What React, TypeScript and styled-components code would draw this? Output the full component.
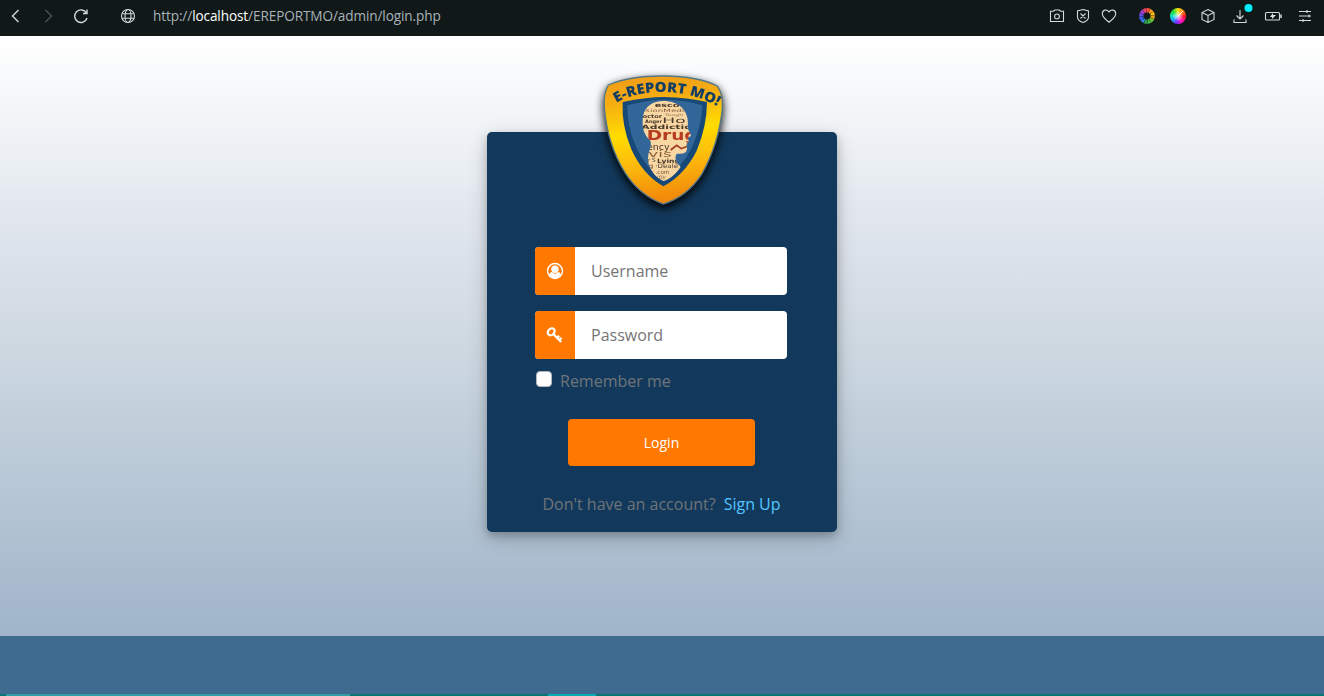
import React from 'react';
import styled, { createGlobalStyle } from 'styled-components';

const GlobalStyle = createGlobalStyle`
  * { box-sizing: border-box; }
  body { margin: 0; font-family: "Open Sans", sans-serif; overflow: hidden; }
`;

const Window = styled.div`
  display: flex;
  flex-direction: column;
  width: 1324px;
  height: 696px;
  background: #406b90;
`;

const BrowserBar = styled.header`
  display: flex;
  align-items: center;
  flex: none;
  height: 36px;
  padding: 0 9px 4px 6px;
  background: #101818;
  color: #d3dada;
`;

const Glyph = styled.svg<{ $gap?: number; $dim?: boolean }>`
  flex: none;
  width: 20px;
  height: 20px;
  margin-left: ${(p) => p.$gap ?? 0}px;
  fill: none;
  stroke: ${(p) => (p.$dim ? '#4b5353' : 'currentColor')};
  stroke-width: 1.1;
  overflow: visible;
`;

const Address = styled.div`
  flex: 1;
  margin-left: 15px;
  font: 400 13.6px/20px "Open Sans", sans-serif;
  letter-spacing: -0.11px;
  color: #a9b3b8;
  white-space: pre;
`;

const Host = styled.span`
  color: #fff;
`;

const Page = styled.main`
  display: flex;
  justify-content: center;
  align-items: flex-start;
  flex: none;
  height: 600px;
  padding-top: 96px;
  background: linear-gradient(#fff 0%, #e8edf2 24%, #e4e9f1 27%, #d6dde6 43%, #d3dce4 46%, #bccbd8 70%, #a0b4c9 100%);
`;

const Card = styled.section`
  display: flex;
  flex-direction: column;
  align-items: center;
  width: 350px;
  height: 400px;
  border-radius: 5px;
  background: #12395b;
  box-shadow: 0 4px 8px rgba(0, 0, 0, 0.2), 0 6px 20px rgba(0, 0, 0, 0.19);
`;

const Logo = styled.svg`
  flex: none;
  width: 150px;
  height: 150px;
  margin: -66px 0 31px 5px;
  overflow: visible;
  filter: drop-shadow(0 4px 5px #000);
`;

const Form = styled.form`
  display: flex;
  flex-direction: column;
  width: 252px;
  margin-right: 2px;
`;

const Field = styled.label`
  display: flex;
  height: 48px;
  margin-bottom: 16px;
  border-radius: 4px;
  overflow: hidden;
  background: #fff;
`;

const FieldIcon = styled.span`
  display: flex;
  align-items: center;
  justify-content: center;
  width: 40px;
  background: #ff7800;
`;

const Input = styled.input`
  flex: 1;
  min-width: 0;
  padding: 0 16px;
  border: 0;
  outline: 0;
  background: transparent;
  font: 400 16px "Open Sans", sans-serif;
  &::placeholder { color: #757575; opacity: 1; }
`;

const Remember = styled.label`
  display: flex;
  align-items: center;
  gap: 8px;
  height: 24px;
  margin: -6px 0 0 1px;
  font-size: 16px;
  color: #6f7479;
`;

const CheckBox = styled.span`
  width: 16px;
  height: 16px;
  margin-bottom: 4px;
  border: 1px solid #adb5bd;
  border-radius: 4px;
  background: #fff;
`;

const LoginButton = styled.button`
  width: 187px;
  height: 47px;
  margin: 26px auto 0 33px;
  border: 0;
  border-radius: 4px;
  background: #ff7800;
  color: #fff;
  font: 400 14px "Open Sans", sans-serif;
`;

const SignUpLine = styled.p`
  display: flex;
  justify-content: center;
  gap: 8px;
  margin: 26px 0 0 1px;
  font-size: 16px;
  line-height: 24px;
  color: #6f7479;
  white-space: nowrap;
`;

const SignUp = styled.a`
  color: #52c6ff;
`;

const Footer = styled.footer`
  flex: 1;
`;

const TaskStrip = styled.div`
  display: flex;
  flex: none;
  height: 2px;
  background: #087575;
`;

const TaskMark = styled.span<{ $width: number; $gap: number; $color: string }>`
  width: ${(p) => p.$width}px;
  margin-left: ${(p) => p.$gap}px;
  background: ${(p) => p.$color};
`;

const wheel = ['#ff4d3d', '#ff9d1c', '#ffbd14', '#e0a020', '#7dc832', '#43b649', '#2f9c4b', '#2f7de0', '#3d5bea', '#6a4be0', '#a23fd0', '#f0456a'];

const WheelIcon = () => (
  <Glyph $gap={18} viewBox="0 0 20 20">
    {wheel.map((c, i) => (
      <path key={c} d="M9.300 6.500 8 2.400Q10 1.700 12 2.400L10.700 6.500Z" fill={c} stroke="none" transform={`rotate(${i * 30 + 10} 10 10)`} />
    ))}
  </Glyph>
);

const Disc = styled.span`
  display: block;
  flex: none;
  width: 16px;
  height: 16px;
  margin-left: 13px;
  border-radius: 50%;
  background: linear-gradient(135deg, transparent 46%, #fff 47% 54%, transparent 55%) 8px 3px / 5px 5px no-repeat,
    radial-gradient(circle at 50% 50%, rgba(255, 255, 255, 0.75) 0 8%, transparent 50%),
    conic-gradient(#ffe600, #ff7a00 50deg, #ff1235 95deg, #ff10c8 150deg, #6a30ff 195deg, #18a8ff 235deg, #13e0c0 270deg, #20dc30 315deg, #ffe600);
`;

const Shield = () => (
  <Logo viewBox="0 0 450 450">
    <defs>
      <linearGradient id="gold" x1="0" y1="0" x2="0.12" y2="1">
        <stop offset="0" stopColor="#f09a18" />
        <stop offset="0.22" stopColor="#f5ad13" />
        <stop offset="0.48" stopColor="#ffdc00" />
        <stop offset="0.7" stopColor="#fdbd0b" />
        <stop offset="1" stopColor="#f28a0b" />
      </linearGradient>
      <clipPath id="head">
        <path d="M220 105C190 105 165 120 159 150C154 180 160 205 180 223C189 241 173 257 174 277C173 304 193 333 220 345C242 339 262 319 272 302C256 290 253 274 260 263C277 263 290 263 291 248L290 234L296 225L293 215L303 210C301 199 292 192 293 180C299 135 266 105 220 105Z" />
      </clipPath>
      <path id="arc" d="M79 111C147 68 285 62 386 123" />
    </defs>
    <path d="M55 57Q120 29 222 30Q325 31 382 60Q400 85 397 128Q386 235 335 325Q291 392 220 414Q149 389 105 320Q52 235 43 125Q40 80 55 57Z" fill="url(#gold)" stroke="#567887" strokeWidth="4" />
    <path d="M98 108Q173 93 222 93Q292 94 351 108Q351 180 320 254Q284 326 220 361Q158 326 124 250Q94 178 98 108Z" fill="#164878" />
    <path d="M112 118Q174 101 222 101Q285 102 337 118Q335 180 307 242Q277 304 220 341Q167 306 138 243Q111 182 112 118Z" fill="#326698" />
    <g clipPath="url(#head)" fontFamily="DejaVu Sans, sans-serif" fill="#49382c">
      <rect x="145" y="100" width="165" height="250" fill="#f8d7a2" />
      <text x="194" y="124" fontSize="17" fontWeight="700" textLength="74" lengthAdjust="spacingAndGlyphs">esco</text>
      <text x="166" y="139" fontSize="13" textLength="117" lengthAdjust="spacingAndGlyphs" fill="#8b6346">sionMedi</text>
      <text x="158" y="156" fontSize="15" fontWeight="700" textLength="58" lengthAdjust="spacingAndGlyphs">octor</text>
      <text x="225" y="151" fontSize="10" textLength="54" lengthAdjust="spacingAndGlyphs" fill="#957050">Tough</text>
      <text x="165" y="170" fontSize="14" fontWeight="700" textLength="51" lengthAdjust="spacingAndGlyphs">Anger</text>
      <text x="217" y="172" fontSize="23" textLength="70" lengthAdjust="spacingAndGlyphs">Ho</text>
      <text x="154" y="190" fontSize="18" fontWeight="700" textLength="151" lengthAdjust="spacingAndGlyphs">Addictio</text>
      <text x="170" y="223" fontSize="40" fontWeight="700" fill="#b63d22" textLength="153" lengthAdjust="spacingAndGlyphs">Drug</text>
      <text x="171" y="251" fontSize="24" textLength="68" lengthAdjust="spacingAndGlyphs">ency</text>
      <path d="M242 252L260 238L274 248L292 241" fill="none" stroke="#a43b20" strokeWidth="5" />
      <text x="175" y="273" fontSize="24" fill="#885f3c" textLength="70" lengthAdjust="spacingAndGlyphs">vis</text>
      <text x="169" y="289" fontSize="17">ir S</text>
      <text x="201" y="290" fontSize="18" fontWeight="700" textLength="69" lengthAdjust="spacingAndGlyphs">Lying</text>
      <text x="176" y="307" fontSize="18" textLength="88" lengthAdjust="spacingAndGlyphs">g ·Deale</text>
      <text x="181" y="324" fontSize="17" fill="#795437">y .com</text>
      <text x="201" y="339" fontSize="14" fill="#795437">(O)r</text>
    </g>
    <text fontFamily="Open Sans, sans-serif" fontSize="42" fontWeight="800" fill="#123e65">
      <textPath href="#arc" textLength="316" lengthAdjust="spacingAndGlyphs">E-REPORT MO!</textPath>
    </text>
  </Logo>
);

export default function App() {
  return (
    <Window>
      <GlobalStyle />
      <BrowserBar>
        <Glyph viewBox="0 0 20 20"><path d="M12.5 4 6.5 10l6 6" strokeWidth="1.4" /></Glyph>
        <Glyph $gap={12} $dim viewBox="0 0 20 20"><path d="m7.5 4 6 6-6 6" strokeWidth="1.4" /></Glyph>
        <Glyph $gap={13} viewBox="0 0 20 20"><path d="M15.4 7A6.3 6.3 0 1 0 16 12M16 3.5V7.5h-4" strokeWidth="1.4" /></Glyph>
        <Glyph $gap={27} viewBox="0 0 20 20">
          <circle cx="10" cy="10" r="6.5" /><ellipse cx="10" cy="10" rx="3" ry="6.5" /><path d="M4.2 7.8h11.6M4.2 12.2h11.6" />
        </Glyph>
        <Address>http://<Host>localhost</Host>/EREPORTMO/admin/login.php</Address>
        <Glyph viewBox="0 0 20 20"><path d="M3.5 5.2h3L7.7 4h4.6l1.2 1.2h3v10.300h-13z" /><circle cx="10" cy="10.400" r="2.400" /></Glyph>
        <Glyph $gap={6} viewBox="0 0 20 20"><path d="M10 3.5 15.5 5v6c0 3-2.500 4.500-5.500 5.500C7 15.500 4.500 14 4.500 11V5zM7.500 7.500l5 5M12.500 7.500l-5 5" /></Glyph>
        <Glyph $gap={6} viewBox="0 0 20 20"><path d="M10 16.200C6.500 13.500 3.300 10.700 3.300 7.700 3.300 3.800 8 2.700 10 6c2-3.300 6.700-2.200 6.700 1.700 0 3-3.200 5.800-6.700 8.500z" /></Glyph>
        <WheelIcon />
        <Disc />
        <Glyph $gap={12} viewBox="0 0 20 20"><path d="m10 3.500 6 3v7l-6 3-6-3v-7zM4 6.500l6 3 6-3M10 9.500v7" /></Glyph>
        <Glyph $gap={12} viewBox="0 0 20 20">
          <path d="M10 4v9M6.500 9.500 10 13l3.500-3.500M4 13.500v3h12v-3" /><circle cx="18.500" cy="2" r="4" fill="#00eeff" stroke="none" />
        </Glyph>
        <Glyph $gap={13} viewBox="0 0 20 20"><rect x="2.500" y="6.500" width="14" height="7.500" rx="1" /><path d="M18 8.500v3.500" strokeWidth="1.500" /><path d="m10 7-3 4h2v2l4-4h-3z" fill="#dfe5e5" stroke="none" /></Glyph>
        <Glyph $gap={12} viewBox="0 0 20 20"><path d="M4 5.500h12M4 10h12M4 14.500h12M12 4v3M14 8.500v3M8 13v3" /></Glyph>
      </BrowserBar>
      <Page>
        <Card>
          <Shield />
          <Form>
            <Field>
              <FieldIcon>
                <svg width="18" height="18" viewBox="0 0 18 18" fill="#fff">
                  <circle cx="9" cy="9" r="7.500" fill="none" stroke="#fff" strokeWidth="1.400" />
                  <circle cx="9" cy="7.300" r="3.700" />
                  <path d="M3 13.400C3.300 11.400 4.300 10.200 5.900 10.100Q9 13.300 12.100 10.100C13.700 10.200 14.700 11.400 15 13.400Q9 19.200 3 13.400Z" />
                </svg>
              </FieldIcon>
              <Input placeholder="Username" />
            </Field>
            <Field>
              <FieldIcon>
                <svg width="18" height="18" viewBox="0 0 18 18" fill="none" stroke="#fff">
                  <ellipse cx="5.200" cy="5.800" rx="3.900" ry="3" transform="rotate(-45 5.200 5.800)" strokeWidth="2.200" />
                  <path d="m7.500 8.300 7.700 7.700M11.200 11.800l2-2.100M13.200 14l2.300-2.300" strokeWidth="2.300" />
                </svg>
              </FieldIcon>
              <Input placeholder="Password" />
            </Field>
            <Remember><CheckBox />Remember me</Remember>
            <LoginButton type="button">Login</LoginButton>
            <SignUpLine>Don't have an account?<SignUp>Sign Up</SignUp></SignUpLine>
          </Form>
        </Card>
      </Page>
      <Footer />
      <TaskStrip>
        <TaskMark $gap={6} $width={344} $color="#2e9fa4" />
        <TaskMark $gap={198} $width={48} $color="#08adb0" />
      </TaskStrip>
    </Window>
  );
}
